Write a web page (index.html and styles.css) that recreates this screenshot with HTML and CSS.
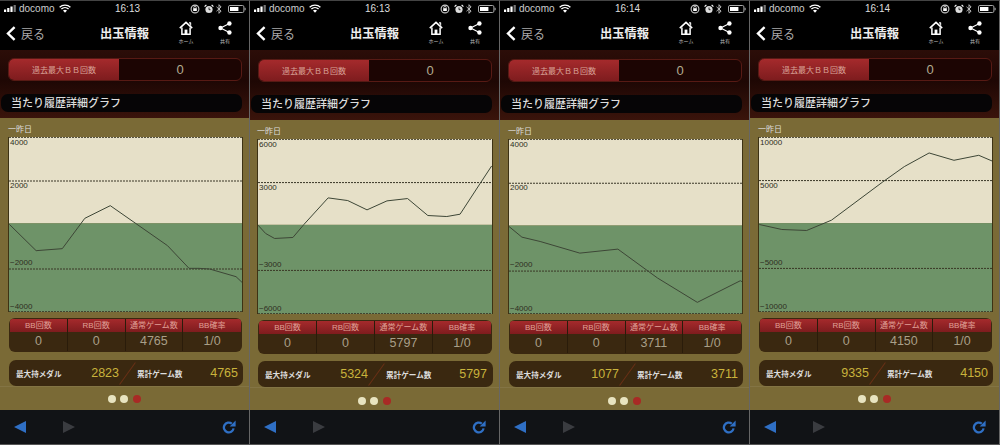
FILE: index.html
```html
<!DOCTYPE html>
<html lang="ja">
<head>
    <meta charset="UTF-8">
    <meta name="viewport" content="width=device-width, initial-scale=1.0">
    <title>出玉情報</title>
    <link rel="stylesheet" href="styles.css">
</head>
<body>
    <!-- icons shared by the four phones -->
    <svg class="icon-defs" aria-hidden="true">
        <defs>
            <symbol id="i-signal" viewBox="0 0 14 7">
                <rect x="0" y="4.5" width="2.2" height="2.5" fill="#fff"/>
                <rect x="3.2" y="3" width="2.2" height="4" fill="#fff"/>
                <rect x="6.4" y="1.5" width="2.2" height="5.5" fill="#fff"/>
                <rect x="9.6" y="0" width="2.2" height="7" fill="#777"/>
            </symbol>
            <symbol id="i-wifi" viewBox="0 0 12 9">
                <path d="M.6 3.2a7.8 7.8 0 0 1 10.8 0M2.4 5a5.2 5.2 0 0 1 7.2 0" fill="none" stroke="#fff" stroke-width="1.3"/>
                <path d="M4 6.6a2.9 2.9 0 0 1 4 0L6 8.8z" fill="#fff"/>
            </symbol>
            <symbol id="i-lock" viewBox="0 0 10 10">
                <circle cx="5" cy="5" r="3.9" fill="none" stroke="#ccc" stroke-width="1.1"/>
                <rect x="3.2" y="4.2" width="3.6" height="2.8" fill="#fff"/>
                <path d="M3.8 4.2V3.4a1.2 1.2 0 0 1 2.4 0v.8" fill="none" stroke="#fff" stroke-width=".7"/>
            </symbol>
            <symbol id="i-alarm" viewBox="0 0 10 10">
                <circle cx="5" cy="5.5" r="3.6" fill="#ddd"/>
                <path d="M5 3.5v2.2h1.5" fill="none" stroke="#000" stroke-width=".8"/>
                <path d="M.6 2.6 2.4.8M9.4 2.6 7.6.8" stroke="#fff" stroke-width="1.2"/>
            </symbol>
            <symbol id="i-bt" viewBox="0 0 6 10">
                <path d="M.5 2.8l4.6 4.2L3 9.3V.7l2.1 2.3L.5 7.2" fill="none" stroke="#ccc" stroke-width=".9"/>
            </symbol>
            <symbol id="i-battery" viewBox="0 0 18 8">
                <rect x=".5" y=".5" width="15.4" height="7" rx="1.4" fill="none" stroke="#aaa"/>
                <rect x="2" y="2" width="8.4" height="4" fill="#fff"/>
                <rect x="16.5" y="2.8" width="1.2" height="2.4" fill="#999"/>
            </symbol>
            <symbol id="i-back" viewBox="0 0 10 15">
                <path d="M8.6 1.2 2 7.5l6.6 6.3" fill="none" stroke="#fff" stroke-width="2.4"/>
            </symbol>
            <symbol id="i-home" viewBox="0 0 14 14">
                <path d="M.8 7.2 7 1.4l6.2 5.8" fill="none" stroke="#fff" stroke-width="1.6"/>
                <path d="M10 1.6h1.8v3.2" fill="#fff" stroke="#fff" stroke-width=".6"/>
                <path d="M2.9 6.6v6.6h8.2V6.6" fill="none" stroke="#fff" stroke-width="1.5"/>
                <rect x="5.6" y="8.6" width="2.8" height="4.6" fill="#fff"/>
            </symbol>
            <symbol id="i-share" viewBox="0 0 14 14">
                <path d="M11.4 2.6 2.6 7l8.8 4.4" fill="none" stroke="#fff" stroke-width="1.1"/>
                <circle cx="11.4" cy="2.5" r="2.2" fill="#fff"/>
                <circle cx="2.5" cy="7" r="2.2" fill="#fff"/>
                <circle cx="11.4" cy="11.5" r="2.2" fill="#fff"/>
            </symbol>
            <symbol id="i-reload" viewBox="0 0 14 14">
                <path d="M11.6 8.4A4.9 4.9 0 1 1 9.8 3.6" fill="none" stroke="#2f6fc4" stroke-width="2.3"/>
                <path d="M7.6 6.4 13.6 6.4 13.6.4z" fill="#2f6fc4"/>
            </symbol>
        </defs>
    </svg>

    <div class="page">

        <section class="phone">
            <div class="status">
                <svg class="ic-signal"><use href="#i-signal"/></svg>
                <span class="carrier">docomo</span>
                <svg class="ic-wifi"><use href="#i-wifi"/></svg>
                <span class="clock">16:13</span>
                <svg class="ic-lock"><use href="#i-lock"/></svg>
                <svg class="ic-alarm"><use href="#i-alarm"/></svg>
                <svg class="ic-bt"><use href="#i-bt"/></svg>
                <svg class="ic-battery"><use href="#i-battery"/></svg>
            </div>
            <div class="nav">
                <svg class="ic-back"><use href="#i-back"/></svg>
                <span class="nav-back">戻る</span>
                <span class="nav-title">出玉情報</span>
                <div class="nav-action nav-home"><svg><use href="#i-home"/></svg><span>ホーム</span></div>
                <div class="nav-action nav-share"><svg><use href="#i-share"/></svg><span>共有</span></div>
            </div>
            <div class="head">
                <div class="record"><span class="record-name">過去最大ＢＢ回数</span><span class="record-value">0</span></div>
                <div class="section-title">当たり履歴詳細グラフ</div>
            </div>
            <div class="body">
                <div class="day">一昨日</div>
                <div class="chart">
                    <svg viewBox="26 36 704 525" preserveAspectRatio="none">
                        <rect class="plus" x="26" y="36" width="704" height="259"/>
                        <rect class="minus" x="26" y="295" width="704" height="266"/>
                        <path class="grid" d="M26 37H730M26 168H730M26 432H730M26 560H730"/>
                        <polyline class="line" points="27,298 108,377 187,371 255,280 332,242 505,362 570,430 600,430 632,432 712,455 730,472"/>
                    </svg>
                    <span class="tick tick-a">4000</span>
                    <span class="tick tick-b">2000</span>
                    <span class="tick tick-c">−2000</span>
                    <span class="tick tick-d">−4000</span>
                </div>
                <div class="counts">
                    <div class="count"><b>BB回数</b><span>0</span></div>
                    <div class="count"><b>RB回数</b><span>0</span></div>
                    <div class="count"><b>通常ゲーム数</b><span>4765</span></div>
                    <div class="count"><b>BB確率</b><span>1/0</span></div>
                </div>
                <div class="totals">
                    <span class="totals-name">最大持メダル</span><span class="totals-num">2823</span>
                    <i class="totals-slash"></i>
                    <span class="totals-name">累計ゲーム数</span><span class="totals-num">4765</span>
                </div>
                <div class="dots"><i></i><i></i><i class="on"></i></div>
            </div>
            <div class="tools">
                <i class="arrow-left"></i><i class="arrow-right"></i>
                <svg class="ic-reload"><use href="#i-reload"/></svg>
            </div>
        </section>

        <section class="phone phone-low phone-left">
            <div class="status">
                <svg class="ic-signal"><use href="#i-signal"/></svg>
                <span class="carrier">docomo</span>
                <svg class="ic-wifi"><use href="#i-wifi"/></svg>
                <span class="clock">16:13</span>
                <svg class="ic-lock"><use href="#i-lock"/></svg>
                <svg class="ic-alarm"><use href="#i-alarm"/></svg>
                <svg class="ic-bt"><use href="#i-bt"/></svg>
                <svg class="ic-battery"><use href="#i-battery"/></svg>
            </div>
            <div class="nav">
                <svg class="ic-back"><use href="#i-back"/></svg>
                <span class="nav-back">戻る</span>
                <span class="nav-title">出玉情報</span>
                <div class="nav-action nav-home"><svg><use href="#i-home"/></svg><span>ホーム</span></div>
                <div class="nav-action nav-share"><svg><use href="#i-share"/></svg><span>共有</span></div>
            </div>
            <div class="head">
                <div class="record"><span class="record-name">過去最大ＢＢ回数</span><span class="record-value">0</span></div>
                <div class="section-title">当たり履歴詳細グラフ</div>
            </div>
            <div class="body">
                <div class="day">一昨日</div>
                <div class="chart">
                    <svg viewBox="22 41 704 526" preserveAspectRatio="none">
                        <rect class="plus" x="22" y="41" width="704" height="258"/>
                        <rect class="minus" x="22" y="299" width="704" height="268"/>
                        <path class="grid" d="M22 42H726M22 172H726M22 436H726M22 566H726"/>
                        <polyline class="line" points="22,300 45,325 72,340 127,337 160,298 233,218 292,226 350,254 410,227 472,220 533,271 590,274 630,267 690,175 725,122"/>
                    </svg>
                    <span class="tick tick-a">6000</span>
                    <span class="tick tick-b">3000</span>
                    <span class="tick tick-c">−3000</span>
                    <span class="tick tick-d">−6000</span>
                </div>
                <div class="counts">
                    <div class="count"><b>BB回数</b><span>0</span></div>
                    <div class="count"><b>RB回数</b><span>0</span></div>
                    <div class="count"><b>通常ゲーム数</b><span>5797</span></div>
                    <div class="count"><b>BB確率</b><span>1/0</span></div>
                </div>
                <div class="totals">
                    <span class="totals-name">最大持メダル</span><span class="totals-num">5324</span>
                    <i class="totals-slash"></i>
                    <span class="totals-name">累計ゲーム数</span><span class="totals-num">5797</span>
                </div>
                <div class="dots"><i></i><i></i><i class="on"></i></div>
            </div>
            <div class="tools">
                <i class="arrow-left"></i><i class="arrow-right"></i>
                <svg class="ic-reload"><use href="#i-reload"/></svg>
            </div>
        </section>

        <section class="phone phone-low">
            <div class="status">
                <svg class="ic-signal"><use href="#i-signal"/></svg>
                <span class="carrier">docomo</span>
                <svg class="ic-wifi"><use href="#i-wifi"/></svg>
                <span class="clock">16:14</span>
                <svg class="ic-lock"><use href="#i-lock"/></svg>
                <svg class="ic-alarm"><use href="#i-alarm"/></svg>
                <svg class="ic-bt"><use href="#i-bt"/></svg>
                <svg class="ic-battery"><use href="#i-battery"/></svg>
            </div>
            <div class="nav">
                <svg class="ic-back"><use href="#i-back"/></svg>
                <span class="nav-back">戻る</span>
                <span class="nav-title">出玉情報</span>
                <div class="nav-action nav-home"><svg><use href="#i-home"/></svg><span>ホーム</span></div>
                <div class="nav-action nav-share"><svg><use href="#i-share"/></svg><span>共有</span></div>
            </div>
            <div class="head">
                <div class="record"><span class="record-name">過去最大ＢＢ回数</span><span class="record-value">0</span></div>
                <div class="section-title">当たり履歴詳細グラフ</div>
            </div>
            <div class="body">
                <div class="day">一昨日</div>
                <div class="chart">
                    <svg viewBox="26 42 704 526" preserveAspectRatio="none">
                        <rect class="plus" x="26" y="42" width="704" height="260"/>
                        <rect class="minus" x="26" y="302" width="704" height="266"/>
                        <path class="grid" d="M26 43H730M26 175H730M26 439H730M26 567H730"/>
                        <polyline class="line" points="26,305 65,337 120,350 240,385 355,373 475,460 595,533 725,468 730,471"/>
                    </svg>
                    <span class="tick tick-a">4000</span>
                    <span class="tick tick-b">2000</span>
                    <span class="tick tick-c">−2000</span>
                    <span class="tick tick-d">−4000</span>
                </div>
                <div class="counts">
                    <div class="count"><b>BB回数</b><span>0</span></div>
                    <div class="count"><b>RB回数</b><span>0</span></div>
                    <div class="count"><b>通常ゲーム数</b><span>3711</span></div>
                    <div class="count"><b>BB確率</b><span>1/0</span></div>
                </div>
                <div class="totals">
                    <span class="totals-name">最大持メダル</span><span class="totals-num">1077</span>
                    <i class="totals-slash"></i>
                    <span class="totals-name">累計ゲーム数</span><span class="totals-num">3711</span>
                </div>
                <div class="dots"><i></i><i></i><i class="on"></i></div>
            </div>
            <div class="tools">
                <i class="arrow-left"></i><i class="arrow-right"></i>
                <svg class="ic-reload"><use href="#i-reload"/></svg>
            </div>
        </section>

        <section class="phone">
            <div class="status">
                <svg class="ic-signal"><use href="#i-signal"/></svg>
                <span class="carrier">docomo</span>
                <svg class="ic-wifi"><use href="#i-wifi"/></svg>
                <span class="clock">16:14</span>
                <svg class="ic-lock"><use href="#i-lock"/></svg>
                <svg class="ic-alarm"><use href="#i-alarm"/></svg>
                <svg class="ic-bt"><use href="#i-bt"/></svg>
                <svg class="ic-battery"><use href="#i-battery"/></svg>
            </div>
            <div class="nav">
                <svg class="ic-back"><use href="#i-back"/></svg>
                <span class="nav-back">戻る</span>
                <span class="nav-title">出玉情報</span>
                <div class="nav-action nav-home"><svg><use href="#i-home"/></svg><span>ホーム</span></div>
                <div class="nav-action nav-share"><svg><use href="#i-share"/></svg><span>共有</span></div>
            </div>
            <div class="head">
                <div class="record"><span class="record-name">過去最大ＢＢ回数</span><span class="record-value">0</span></div>
                <div class="section-title">当たり履歴詳細グラフ</div>
            </div>
            <div class="body">
                <div class="day">一昨日</div>
                <div class="chart">
                    <svg viewBox="26 35 704 526" preserveAspectRatio="none">
                        <rect class="plus" x="26" y="35" width="704" height="259"/>
                        <rect class="minus" x="26" y="294" width="704" height="267"/>
                        <path class="grid" d="M26 36H730M26 166H730M26 430H730M26 560H730"/>
                        <polyline class="line" points="27,298 95,313 170,316 245,285 400,170 465,124 540,83 615,105 690,90 730,107"/>
                    </svg>
                    <span class="tick tick-a">10000</span>
                    <span class="tick tick-b">5000</span>
                    <span class="tick tick-c">−5000</span>
                    <span class="tick tick-d">−10000</span>
                </div>
                <div class="counts">
                    <div class="count"><b>BB回数</b><span>0</span></div>
                    <div class="count"><b>RB回数</b><span>0</span></div>
                    <div class="count"><b>通常ゲーム数</b><span>4150</span></div>
                    <div class="count"><b>BB確率</b><span>1/0</span></div>
                </div>
                <div class="totals">
                    <span class="totals-name">最大持メダル</span><span class="totals-num">9335</span>
                    <i class="totals-slash"></i>
                    <span class="totals-name">累計ゲーム数</span><span class="totals-num">4150</span>
                </div>
                <div class="dots"><i></i><i></i><i class="on"></i></div>
            </div>
            <div class="tools">
                <i class="arrow-left"></i><i class="arrow-right"></i>
                <svg class="ic-reload"><use href="#i-reload"/></svg>
            </div>
        </section>

    </div>
</body>
</html>
```

FILE: styles.css
```css
:root {
    --olive: #7a6a36;
    --panel-brown: #3a2810;
    --red-top: #a52a2c;
    --red-bottom: #7e1c1e;
    --gold: #c9b33c;
    --blue: #2f6fc4;
}

* {
    box-sizing: border-box;
}

html, body {
    margin: 0;
    height: 100%;
    overflow: hidden;
    background: #000;
}

body {
    font-family: "Liberation Sans", "Noto Sans CJK JP", sans-serif;
}

.icon-defs {
    display: none;
}

.page {
    display: flex;
    width: 1000px;
    height: 445px;
}

.phone {
    display: flex;
    flex-direction: column;
    width: 250px;
    height: 445px;
    border-top: 1px solid #444;
    border-right: 1px solid #666;
    border-bottom: 1px solid #555;
}

/* status bar */
.status {
    display: flex;
    align-items: center;
    height: 15px;
    padding-left: 4px;
    background: #000;
    color: #ccc;
    font-size: 10px;
}

.ic-signal { width: 14px; height: 7px; }
.carrier { width: 36px; margin-left: 1px; }
.ic-wifi { width: 12px; height: 9px; margin-left: 4px; }
.clock { width: 26px; margin-left: 44px; font-size: 10px; color: #ddd; }
.ic-lock { width: 10px; height: 10px; margin-left: 49px; }
.ic-alarm { width: 10px; height: 10px; margin-left: 4px; }
.ic-bt { width: 6px; height: 10px; margin-left: 2px; }
.ic-battery { width: 18px; height: 8px; margin-left: 6px; }

/* nav bar */
.nav {
    display: flex;
    align-items: center;
    height: 34px;
    padding-left: 6px;
    background: #000;
}

.ic-back { width: 10px; height: 15px; }

.nav-back {
    width: 24px;
    margin-left: 5px;
    font-size: 12px;
    color: #aaa;
}

.nav-title {
    width: 50px;
    margin-left: 55px;
    font-size: 12.25px;
    font-weight: 700;
    color: #eee;
    white-space: nowrap;
}

.nav-action {
    display: flex;
    flex-direction: column;
    align-items: center;
    width: 22px;
    color: #bbb;
    font-size: 5px;
    line-height: 7px;
}

.nav-action svg {
    width: 14px;
    height: 14px;
    margin-bottom: 3px;
}

.nav-home { margin-left: 25px; }
.nav-share { margin-left: 17px; }

/* record + section title */
.head {
    display: flex;
    flex-direction: column;
    gap: 13px;
    height: 68px;
    padding-top: 8px;
    background: linear-gradient(#2c0d08, #1e0704 45%, #3a140b);
}

.record {
    display: flex;
    align-items: stretch;
    height: 23px;
    margin: 0 7px 0 8px;
    border: 1px solid #571a14;
    border-radius: 6px;
    background: #1c0503;
    overflow: hidden;
}

.record-name {
    display: flex;
    align-items: center;
    justify-content: center;
    width: 110px;
    background: linear-gradient(var(--red-top), var(--red-bottom));
    color: #d9a49a;
    font-size: 8px;
}

.record-value {
    flex: 1;
    text-align: center;
    line-height: 21px;
    font-size: 13px;
    color: #b3ab90;
}

.section-title {
    height: 18px;
    margin: 0 7px 0 1px;
    padding-left: 10px;
    border-radius: 7px;
    background: #060506;
    color: #ddd;
    font-size: 11px;
    font-weight: 500;
    line-height: 18px;
}

/* olive body */
.body {
    flex: 1;
    padding: 5px 6px 0 8px;
    background: var(--olive);
}

.day {
    height: 14px;
    font-size: 8px;
    line-height: 13px;
    color: #ddd;
}

.chart {
    position: relative;
    height: 175px;
    border-left: 1px solid #3d3214;
    border-right: 1px solid #3d3214;
}

.chart svg {
    display: block;
    width: 100%;
    height: 100%;
}

.plus { fill: #e6e0c8; }
.minus { fill: #6e9368; }

.grid {
    fill: none;
    stroke: #3a3726;
    stroke-width: 1;
    stroke-dasharray: 2 1;
    vector-effect: non-scaling-stroke;
}

.line {
    fill: none;
    stroke: #3d4636;
    stroke-width: 1;
    vector-effect: non-scaling-stroke;
}

.tick {
    position: absolute;
    left: 1px;
    font-size: 8px;
    line-height: 9px;
    color: #2e2e22;
}

.tick-a { top: 1px; }
.tick-b { top: 44px; }
.tick-c { top: 121px; }
.tick-d { top: 165px; }

.counts {
    display: grid;
    grid-template-columns: repeat(4, 1fr);
    height: 34px;
    margin: 6px 1px 0;
    padding: 1px;
    border-radius: 6px;
    background: var(--panel-brown);
    overflow: hidden;
}

.count {
    display: flex;
    flex-direction: column;
    border-right: 1px solid #2a1c0a;
}

.count:last-child {
    border-right: 0;
}

.count b {
    height: 13px;
    background: linear-gradient(var(--red-top), var(--red-bottom));
    color: #e0a096;
    font-size: 8px;
    font-weight: 400;
    line-height: 13px;
    text-align: center;
}

.count span {
    flex: 1;
    color: #a99f88;
    font-size: 12.5px;
    line-height: 19px;
    text-align: center;
}

.totals {
    display: flex;
    align-items: center;
    height: 26px;
    margin: 8px 0 0 1px;
    padding-left: 7px;
    border-radius: 7px;
    background: var(--panel-brown);
}

.totals-name {
    flex: none;
    width: 46px;
    color: #ddd;
    font-size: 7.6px;
    font-weight: 700;
    white-space: nowrap;
}

.totals-num {
    flex: none;
    width: 57px;
    color: var(--gold);
    font-size: 12.5px;
    text-align: right;
}

.totals-slash {
    flex: none;
    width: 1px;
    height: 27px;
    margin: 0 9px 0 8px;
    background: #6a3016;
    transform: rotate(36deg);
}

.totals-num:last-child {
    width: 55px;
}

.dots {
    display: flex;
    justify-content: center;
    gap: 4.5px;
    margin: 0 -6px 0 -8px;
    padding: 8px 1px 0 0;
    border-top: 1px solid rgba(255, 255, 255, 0.07);
}

.dots i {
    width: 8px;
    height: 8px;
    border-radius: 50%;
    background: #e8e4c0;
}

.dots i.on {
    background: #a82a25;
}

/* bottom toolbar */
.tools {
    display: flex;
    align-items: center;
    height: 34px;
    padding-left: 14px;
    background: #111316;
}

.arrow-left,
.arrow-right {
    width: 0;
    height: 0;
    border-top: 6px solid transparent;
    border-bottom: 6px solid transparent;
}

.arrow-left {
    border-right: 12px solid var(--blue);
}

.arrow-right {
    margin-left: 37px;
    border-left: 12px solid #3a3c40;
}

.ic-reload {
    width: 14px;
    height: 14px;
    margin-left: 147px;
}

/* phones 2 and 3 were shot about 2px lower from the header down */
.phone-low .head {
    height: 70px;
    padding-top: 9px;
}

.phone-low .totals {
    margin-top: 7px;
}

.phone-low .dots {
    padding-top: 9px;
}

.phone-left .body {
    padding-left: 7px;
}

.phone-left .dots {
    margin-left: -7px;
}
```
